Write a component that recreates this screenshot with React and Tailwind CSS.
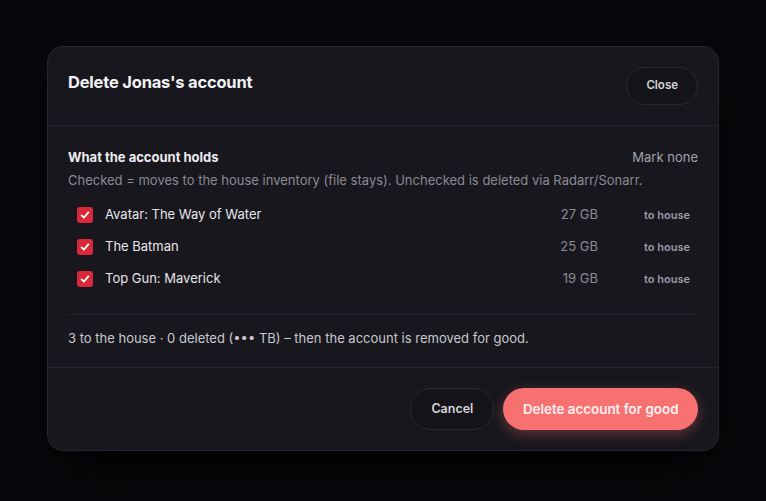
const ITEMS = [
  { title: 'Avatar: The Way of Water', size: '27 GB' },
  { title: 'The Batman', size: '25 GB' },
  { title: 'Top Gun: Maverick', size: '19 GB' },
];

function Check() {
  return (
    <span className="w-4 h-4 rounded-[3px] bg-[#d9283a] flex items-center justify-center shrink-0">
      <svg viewBox="0 0 16 16" className="w-3 h-3" fill="none" stroke="white" strokeWidth="2.4" strokeLinecap="round" strokeLinejoin="round">
        <path d="M3.5 8.5l3 3 6-7" />
      </svg>
    </span>
  );
}

export default function App() {
  return (
    <div className="w-[766px] h-[501px] bg-[#08080c] flex items-start justify-center pt-[46px] font-['Inter',sans-serif]">
      <div className="w-[672px] h-[405px] bg-[#17171d] border border-[#26262e] rounded-2xl flex flex-col shadow-2xl shadow-black">
        {/* header */}
        <div className="flex items-start justify-between px-5 pt-[20px] h-[79px] border-b border-[#26262e]">
          <h2 className="text-[16.5px] font-bold text-[#f2f2f5] tracking-[-0.2px] leading-[30px]">Delete Jonas's account</h2>
          <button className="h-[38px] px-[19px] rounded-full border border-[#2a2a33] bg-[#141419] text-[11.5px] font-semibold text-[#d6d6dc]">Close</button>
        </div>

        {/* body */}
        <div className="px-5 pt-[22px] flex-1">
          <div className="flex items-center justify-between">
            <h3 className="text-[13px] font-bold text-[#ececf0]">What the account holds</h3>
            <button className="text-[13px] text-[#a3a3ad]">Mark none</button>
          </div>
          <p className="text-[13px] text-[#8a8a94] mt-[3px]">Checked = moves to the house inventory (file stays). Unchecked is deleted via Radarr/Sonarr.</p>

          <div className="mt-[9px] pl-[9px] pr-2">
            {ITEMS.map(it => (
              <div key={it.title} className="flex items-center h-8">
                <Check />
                <span className="ml-3 text-[13px] text-[#e6e6ea] flex-1">{it.title}</span>
                <span className="text-[13px] text-[#8d8d96] w-[60px] text-right">{it.size}</span>
                <span className="text-[11px] font-semibold text-[#9a9aa3] w-[92px] text-right">to house</span>
              </div>
            ))}
          </div>

          <div className="mt-[19px] border-t border-[#26262e] pt-[14px]">
            <p className="text-[13px] text-[#c9c9cf]">3 to the house · 0 deleted (••• TB) – then the account is removed for good.</p>
          </div>
        </div>

        {/* footer */}
        <div className="border-t border-[#26262e] h-[83px] flex items-center justify-end gap-[9px] px-5">
          <button className="h-[42px] px-[20px] rounded-full border border-[#2a2a33] bg-[#141419] text-[12.5px] font-semibold text-[#d6d6dc]">Cancel</button>
          <button className="h-[42px] px-[19.5px] rounded-full bg-[#f87171] text-[13.4px] font-semibold text-[#fff1f1] shadow-[0_4px_14px_rgba(248,113,113,0.35)]">Delete account for good</button>
        </div>
      </div>
    </div>
  );
}
